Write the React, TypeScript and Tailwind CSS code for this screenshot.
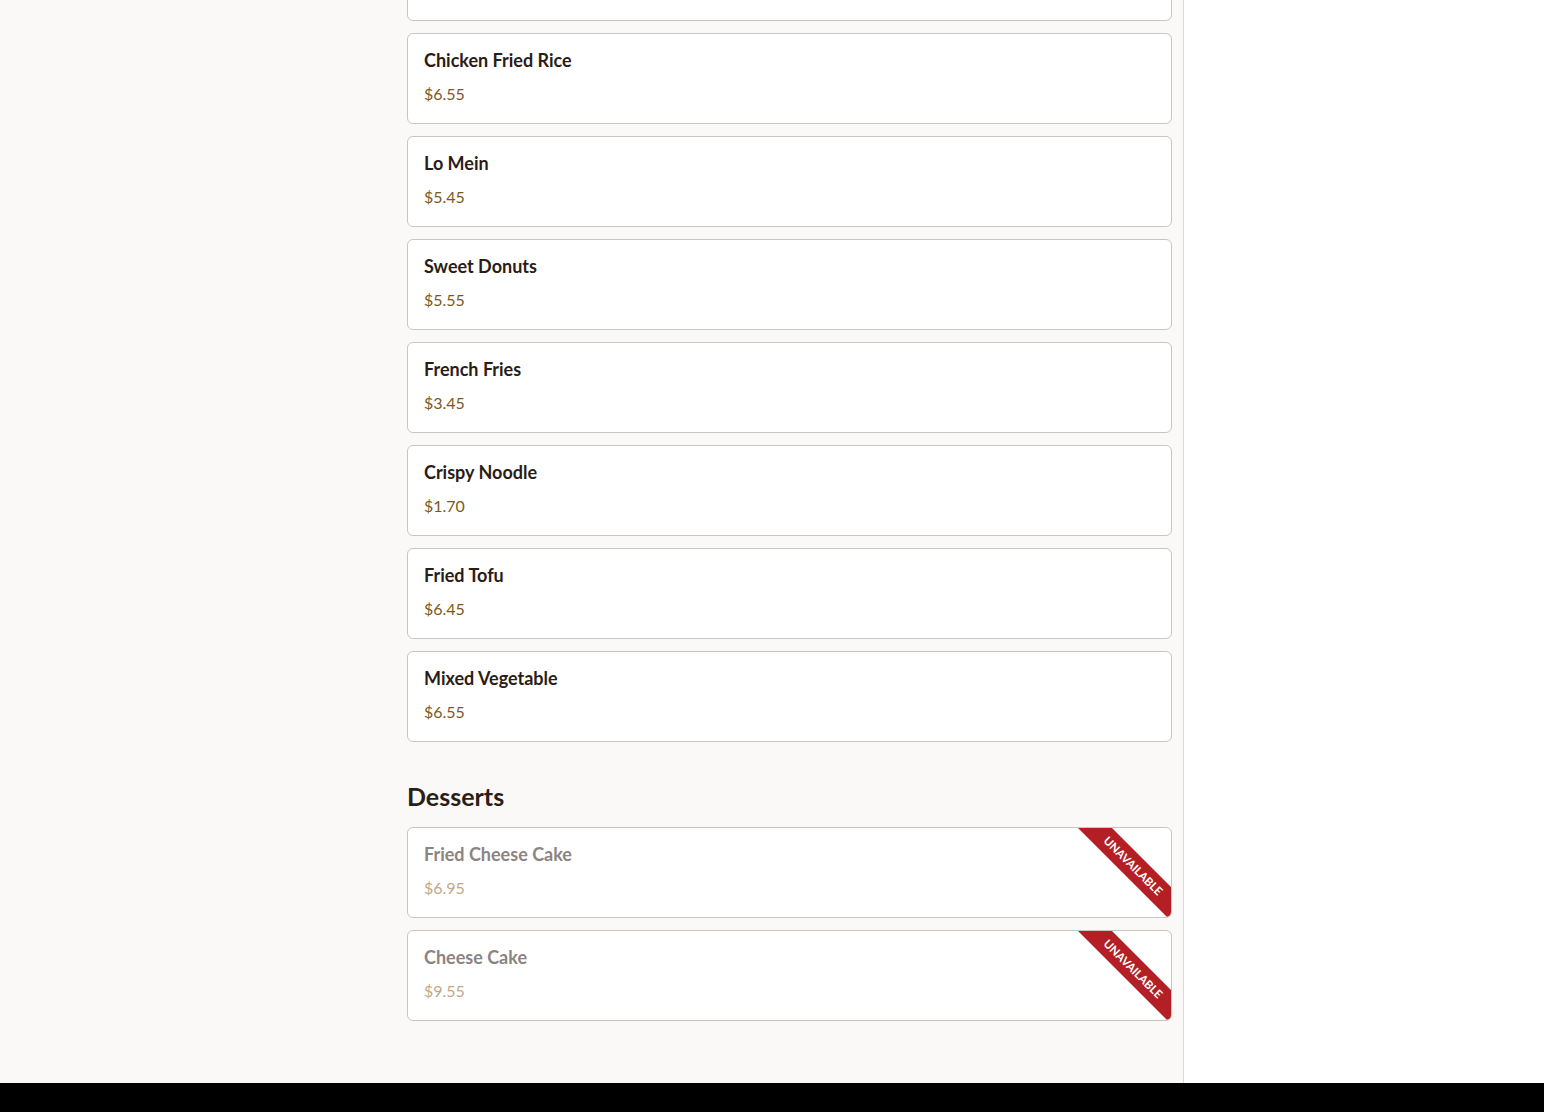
import React from "react";

type Item = { name: string; price: string; unavailable?: boolean };

const mains: Item[] = [
  { name: "Chicken Fried Rice", price: "$6.55" },
  { name: "Lo Mein", price: "$5.45" },
  { name: "Sweet Donuts", price: "$5.55" },
  { name: "French Fries", price: "$3.45" },
  { name: "Crispy Noodle", price: "$1.70" },
  { name: "Fried Tofu", price: "$6.45" },
  { name: "Mixed Vegetable", price: "$6.55" },
];

const desserts: Item[] = [
  { name: "Fried Cheese Cake", price: "$6.95", unavailable: true },
  { name: "Cheese Cake", price: "$9.55", unavailable: true },
];

function Card({ item }: { item: Item }) {
  return (
    <div className="relative overflow-hidden rounded-[6px] border border-[#c9c5c2] bg-white px-4 pt-4 pb-[17px]">
      <div
        className={
          "text-[18px] leading-5 font-bold " +
          (item.unavailable ? "text-[#8c8480]" : "text-[#2a1c16]")
        }
      >
        {item.name}
      </div>
      <div
        className={
          "mt-3 text-[16px] leading-6 " +
          (item.unavailable ? "text-[#c2a888]" : "text-[#7a5a1c]")
        }
      >
        {item.price}
      </div>
      {item.unavailable && (
        <div className="absolute right-[-42px] top-[26px] flex h-[24px] w-[160px] rotate-45 items-center justify-center bg-[#b31f24] text-[11.5px] font-bold uppercase text-white">
          Unavailable
        </div>
      )}
    </div>
  );
}

export default function App() {
  return (
    <div
      className="flex h-[1112px] w-full flex-col overflow-hidden bg-white"
      style={{ fontFamily: "Lato, 'Noto Sans', sans-serif" }}
    >
      <div className="flex min-h-0 flex-1">
        <div className="w-[1184px] border-r border-[#dcdad8] bg-[#faf9f7] pl-[407px] pr-[11px]">
          <div className="-mt-[70px] flex flex-col gap-[12px]">
            <div className="h-[91px] rounded-[6px] border border-[#c9c5c2] bg-white" />
            {mains.map((m) => (
              <Card key={m.name} item={m} />
            ))}
          </div>
          <h2 className="mt-[38px] mb-[15px] text-[25px] leading-8 font-bold text-[#2a1c16]">
            Desserts
          </h2>
          <div className="flex flex-col gap-[12px]">
            {desserts.map((m) => (
              <Card key={m.name} item={m} />
            ))}
          </div>
        </div>
        <div className="flex-1 bg-white" />
      </div>
      <div className="h-[29px] w-full shrink-0 bg-black" />
    </div>
  );
}
